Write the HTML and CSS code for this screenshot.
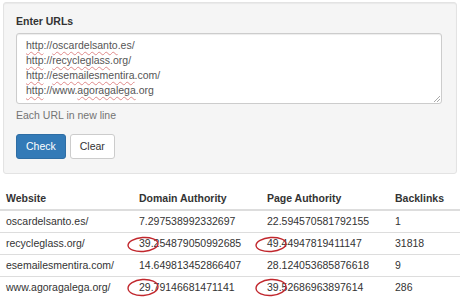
FILE: index.html
```html
<!DOCTYPE html>
<html lang="en">

<head>
    <meta charset="UTF-8">
    <meta name="viewport" content="width=device-width, initial-scale=1.0">
    <title>Domain Authority Checker</title>
    <link rel="stylesheet" href="styles.css">
</head>

<body>
    <div class="well">
        <label class="field-label">Enter URLs</label>
        <div class="url-box">
            <div><span class="typo">http</span>://<span class="typo">oscardelsanto</span>.es/</div>
            <div><span class="typo">http</span>://<span class="typo">recycleglass</span>.org/</div>
            <div><span class="typo">http</span>://<span class="typo">esemailesmentira</span>.com/</div>
            <div><span class="typo">http</span>://www.<span class="typo">agoragalega</span>.org</div>
        </div>
        <p class="help-block">Each URL in new line</p>
        <div class="actions">
            <button class="btn btn-primary">Check</button>
            <button class="btn btn-default">Clear</button>
        </div>
    </div>

    <table class="results">
        <colgroup>
            <col class="col-site">
            <col class="col-num">
            <col class="col-num">
            <col class="col-links">
        </colgroup>
        <thead>
            <tr>
                <th>Website</th>
                <th>Domain Authority</th>
                <th>Page Authority</th>
                <th>Backlinks</th>
            </tr>
        </thead>
        <tbody>
            <tr>
                <td>oscardelsanto.es/</td>
                <td>7.297538992332697</td>
                <td>22.594570581792155</td>
                <td>1</td>
            </tr>
            <tr>
                <td>recycleglass.org/</td>
                <td class="marked">39.254879050992685
                    <svg class="ring" width="32" height="17" viewBox="0 0 32 17"><ellipse cx="16" cy="8.5" rx="15" ry="7" transform="rotate(-4 16 8.5)"/></svg>
                </td>
                <td class="marked">49.44947819411147
                    <svg class="ring" width="32" height="17" viewBox="0 0 32 17"><ellipse cx="16" cy="8.5" rx="15" ry="7" transform="rotate(-4 16 8.5)"/></svg>
                </td>
                <td>31818</td>
            </tr>
            <tr>
                <td>esemailesmentira.com/</td>
                <td>14.649813452866407</td>
                <td>28.124053685876618</td>
                <td>9</td>
            </tr>
            <tr>
                <td>www.agoragalega.org/</td>
                <td class="marked">29.79146681471141
                    <svg class="ring ring-low" width="32" height="19" viewBox="0 0 32 19"><ellipse cx="16" cy="9.5" rx="15" ry="8" transform="rotate(-4 16 9.5)"/></svg>
                </td>
                <td class="marked">39.52686963897614
                    <svg class="ring ring-low" width="32" height="19" viewBox="0 0 32 19"><ellipse cx="16" cy="9.5" rx="15" ry="8" transform="rotate(-4 16 9.5)"/></svg>
                </td>
                <td>286</td>
            </tr>
        </tbody>
    </table>
</body>

</html>
```

FILE: styles.css
```css
body {
    margin: 0;
    font-family: "Liberation Sans", Arial, sans-serif;
    font-size: 10.5px;
    line-height: 15px;
    color: #333;
    background: #fff;
}

.well {
    margin: 2px 3px 0;
    padding: 11px 14px 14px 12px;
    background-color: #f5f5f5;
    border: 1px solid #e3e3e3;
    border-radius: 3px;
    box-shadow: inset 0 1px 1px rgba(0, 0, 0, 0.05);
}

.field-label {
    display: block;
    margin-bottom: 4px;
    font-weight: bold;
}

.url-box {
    height: 61px;
    padding: 4px 9px;
    background-color: #fff;
    border: 1px solid #ccc;
    border-radius: 3px;
    box-shadow: inset 0 1px 1px rgba(0, 0, 0, 0.075);
    color: #555;
    background-image: linear-gradient(135deg, transparent 45%, #aaa 45%, #aaa 55%, transparent 55%, transparent 70%, #aaa 70%, #aaa 80%, transparent 80%);
    background-size: 6px 6px;
    background-position: right 1px bottom 1px;
    background-repeat: no-repeat;
}

.typo {
    text-decoration: underline wavy #e08a8a;
    text-decoration-thickness: 1px;
    text-underline-offset: 2px;
}

.help-block {
    margin: 4px 0 11px;
    color: #737373;
}

.actions {
    display: flex;
    gap: 4px;
}

.btn {
    height: 25px;
    padding: 4px 9px;
    font-family: inherit;
    font-size: 10.5px;
    line-height: 15px;
    border: 1px solid transparent;
    border-radius: 3px;
    cursor: pointer;
}

.btn-primary {
    color: #fff;
    background-color: #337ab7;
    border-color: #2e6da4;
}

.btn-default {
    color: #333;
    background-color: #fff;
    border-color: #ccc;
}

.results {
    width: 100%;
    margin-top: 14px;
    border-collapse: collapse;
    table-layout: fixed;
}

.col-site {
    width: 133px;
}

.col-num {
    width: 128px;
}

.col-links {
    width: 71px;
}

.results th,
.results td {
    padding: 3px 6px;
    text-align: left;
    white-space: nowrap;
}

.results th {
    font-weight: bold;
    border-bottom: 2px solid #ddd;
}

.results td {
    border-top: 1px solid #ddd;
}

.marked {
    position: relative;
}

.ring {
    position: absolute;
    left: -6px;
    top: 3px;
    fill: none;
    stroke: #c1272d;
    stroke-width: 1.4;
}

.ring-low {
    top: 1px;
}
```
